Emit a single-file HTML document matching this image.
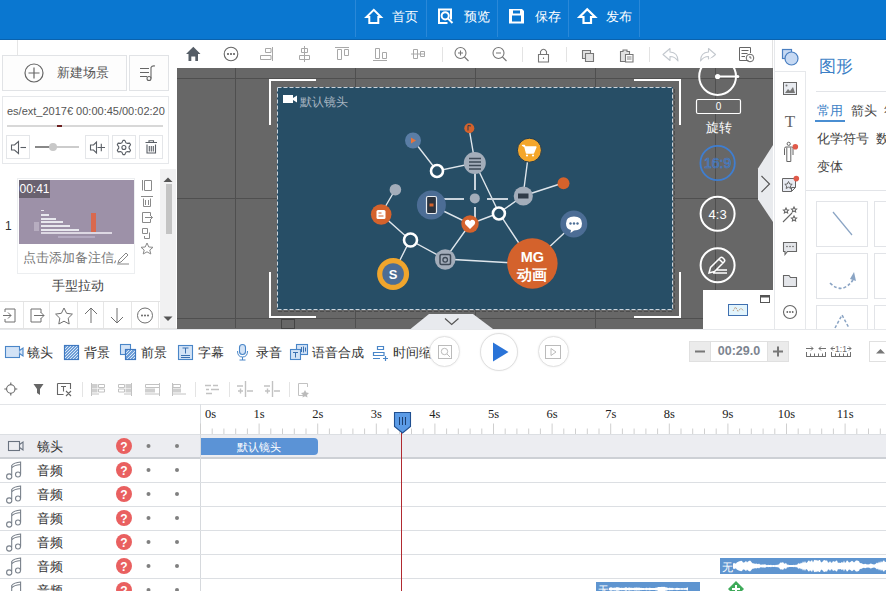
<!DOCTYPE html>
<html><head><meta charset="utf-8">
<style>
*{margin:0;padding:0;box-sizing:border-box}
html,body{width:886px;height:591px;overflow:hidden;background:#fff;font-family:"Liberation Sans",sans-serif;color:#333}
.a{position:absolute}
svg{position:absolute;overflow:visible}
#hdr{left:0;top:0;width:886px;height:40px;background:#0a77d0;border-bottom:1px solid #0a62ad}
.hsep{top:0;width:1px;height:37px;background:#2a88d8}
.htx{top:9px;color:#fff;font-size:13px;line-height:16px}
#tb{left:177px;top:40px;width:596px;height:28px;background:#fff}
#cv{left:177px;top:68px;width:596px;height:261px;background:#676767;overflow:hidden}
.gl{background:#4f4f4f}
#slide{left:100px;top:19px;width:396px;height:223px;background:#274e66}
.tsep{top:47px;width:1px;height:16px;background:#e3e3e3}
</style></head><body>
<!-- header -->
<div id="hdr" class="a">
  <div class="a hsep" style="left:355px"></div>
  <div class="a hsep" style="left:426px"></div>
  <div class="a hsep" style="left:497px"></div>
  <div class="a hsep" style="left:568px"></div>
  <div class="a hsep" style="left:639px"></div>
  <div class="a htx" style="left:392px">首页</div>
  <div class="a htx" style="left:464px">预览</div>
  <div class="a htx" style="left:535px">保存</div>
  <div class="a htx" style="left:606px">发布</div>
</div>

<svg style="left:356px;top:0" width="290" height="40" viewBox="356 0 290 40">
 <path d="M369.3 23V17H366.5L373.8 9.8L381 17H378.3V23Z" fill="none" stroke="#fff" stroke-width="2" stroke-linejoin="miter"/>
 <path d="M451 19.5V9.5H439V23H447.5" fill="none" stroke="#fff" stroke-width="2"/>
 <circle cx="445.2" cy="15.8" r="3.6" fill="none" stroke="#fff" stroke-width="2"/>
 <path d="M447.8 18.4L452.5 23" stroke="#fff" stroke-width="2"/>
 <path d="M509 9H522L524 11V23.5H509Z" fill="#fff"/>
 <rect x="513" y="10.5" width="7" height="3" fill="#0a77d0"/>
 <rect x="512" y="15.5" width="9" height="6" fill="#0a77d0"/>
 <path d="M583.5 23V17H579.5L587.2 9.3L595 17H591V23Z" fill="none" stroke="#fff" stroke-width="2.2" stroke-linejoin="miter"/>
</svg>



<!-- canvas -->
<div id="cv" class="a">
  <div class="a gl" style="left:0;top:10px;width:596px;height:1px"></div>
  <div class="a gl" style="left:0;top:130px;width:596px;height:1px"></div>
  <div class="a gl" style="left:0;top:250px;width:596px;height:1px"></div>
  <div class="a gl" style="left:58px;top:0;width:1px;height:260px"></div>
  <div class="a gl" style="left:178px;top:0;width:1px;height:260px"></div>
  <div class="a gl" style="left:298px;top:0;width:1px;height:260px"></div>
  <div class="a gl" style="left:418px;top:0;width:1px;height:260px"></div>
  <div class="a gl" style="left:538px;top:0;width:1px;height:260px"></div>
  <div id="slide" class="a"></div>
</div>


<!-- left panel -->
<div class="a" style="left:17px;top:40px;width:1px;height:15px;background:#e6e6e6"></div>
<div class="a" style="left:2px;top:55px;width:125px;height:36px;border:1px solid #e1e3e6;background:#fdfdfd"></div>
<svg style="left:24px;top:63px" width="20" height="20" viewBox="0 0 20 20"><circle cx="10" cy="10" r="9" fill="none" stroke="#666" stroke-width="1.2"/><path d="M10 4.5V15.5M4.5 10H15.5" stroke="#666" stroke-width="1.2"/></svg>
<div class="a" style="left:57px;top:66px;font-size:12.5px;color:#555;line-height:14px">新建场景</div>
<div class="a" style="left:129px;top:55px;width:40px;height:36px;border:1px solid #e1e3e6;background:#fdfdfd"></div>
<svg style="left:139px;top:64px" width="20" height="18" viewBox="0 0 20 18"><path d="M1 4.5H10M1 8.5H10M1 12.5H8M12 14.5V3.5Q13 1.5 16 2" stroke="#666" stroke-width="1.1" fill="none"/><circle cx="10" cy="14.5" r="2" fill="none" stroke="#666" stroke-width="1.1"/></svg>
<div class="a" style="left:2px;top:96px;width:167px;height:68px;border:1px solid #e6e8eb;background:#fff"></div>
<div class="a" style="left:7px;top:103px;width:160px;height:16px;overflow:hidden;white-space:nowrap;font-size:11px;color:#555;line-height:16px">es/ext_2017€&nbsp;00:00:45/00:02:20</div>
<div class="a" style="left:7px;top:125px;width:156px;height:2px;background:#d8d8d8"></div>
<div class="a" style="left:57px;top:125px;width:5px;height:2px;background:#6b1d1d"></div>
<div class="a" style="left:6px;top:135px;width:24px;height:24px;border:1px solid #e4e6e9"></div>
<svg style="left:0;top:130px" width="170" height="35" viewBox="0 130 170 35"><g fill="none" stroke="#5a5f66" stroke-width="1.1"><path d="M11.5 145H14.5L18.5 141.5V153.5L14.5 150H11.5Z"/><path d="M20.5 147.5H26"/></g></svg>
<div class="a" style="left:35px;top:146px;width:44px;height:2px;background:#ccc"></div>
<div class="a" style="left:35px;top:146px;width:16px;height:2px;background:#888"></div>
<div class="a" style="left:49px;top:143px;width:8px;height:8px;border-radius:50%;background:#c8c8c8"></div>
<div class="a" style="left:85px;top:135px;width:24px;height:24px;border:1px solid #e4e6e9"></div>
<svg style="left:0;top:130px" width="170" height="35" viewBox="0 130 170 35"><g fill="none" stroke="#5a5f66" stroke-width="1.1"><path d="M90.5 145H93.5L96.5 142V153L93.5 150H90.5Z"/><path d="M97.5 147.5H105M101.3 143.8V151.2"/></g></svg>
<div class="a" style="left:112px;top:135px;width:24px;height:24px;border:1px solid #e4e6e9"></div>
<svg style="left:0;top:130px" width="170" height="35" viewBox="0 130 170 35"><g fill="none" stroke="#5a5f66" stroke-width="1.1" stroke-linejoin="round"><path d="M122.96 140.36L124.84 140.36L125.89 142.70L127.07 143.37L129.61 143.12L130.55 144.74L129.06 146.82L129.06 148.18L130.55 150.26L129.61 151.88L127.07 151.63L125.89 152.30L124.84 154.64L122.96 154.64L121.91 152.30L120.73 151.63L118.19 151.88L117.25 150.26L118.74 148.18L118.74 146.82L117.25 144.74L118.19 143.12L120.73 143.37L121.91 142.70Z"/><circle cx="123.9" cy="147.5" r="2"/></g></svg>
<div class="a" style="left:139px;top:135px;width:24px;height:24px;border:1px solid #e4e6e9"></div>
<svg style="left:0;top:130px" width="170" height="35" viewBox="0 130 170 35"><g fill="none" stroke="#5a5f66" stroke-width="1.1"><path d="M145.5 142.5H157M149 142.5V140.8H153.5V142.5M147 144.5V153H155.5V144.5M149.3 146V151.5M151.3 146V151.5M153.3 146V151.5"/></g></svg>

<div class="a" style="left:5px;top:219px;font-size:12px;color:#333">1</div>
<div class="a" style="left:17px;top:178px;width:118px;height:96px;border:1px solid #eceef0;background:#fff"></div>
<div class="a" style="left:19px;top:180px;width:115px;height:64px;background:#9d91a8;overflow:hidden">
  <div class="a" style="left:0;top:0;width:31px;height:18px;background:#6a6270;color:#fff;font-size:12px;line-height:18px;text-align:center">00:41</div>
  <div class="a" style="left:22px;top:30px;width:3px;height:1px;background:#e8e8ee"></div>
  <div class="a" style="left:22px;top:34px;width:8px;height:2px;background:#e8e8ee"></div>
  <div class="a" style="left:22px;top:38px;width:15px;height:2px;background:#e8e8ee"></div>
  <div class="a" style="left:22px;top:41px;width:22px;height:2px;background:#e8e8ee"></div>
  <div class="a" style="left:22px;top:45px;width:29px;height:2px;background:#e8e8ee"></div>
  <div class="a" style="left:22px;top:49px;width:38px;height:2px;background:#e8e8ee"></div>
  <div class="a" style="left:22px;top:52px;width:71px;height:2px;background:#ddd8e3"></div>
  <div class="a" style="left:72px;top:33px;width:5px;height:19px;background:#d9694e"></div>
  <div class="a" style="left:15px;top:42px;width:5px;height:9px;background:#b7adc0"></div>
  <div class="a" style="left:39px;top:56px;width:37px;height:2px;background:#b3a9c0"></div>
</div>
<div class="a" style="left:23px;top:249px;width:93px;height:18px;overflow:hidden;white-space:nowrap;font-size:13px;color:#777;line-height:18px">点击添加备注信息</div>
<svg style="left:116px;top:251px" width="14" height="14" viewBox="0 0 14 14"><path d="M2 12L3 9L10 2L12 4L5 11ZM1 13H13" fill="none" stroke="#888" stroke-width="1"/></svg>
<div class="a" style="left:52px;top:278px;font-size:12.5px;color:#444;line-height:16px">手型拉动</div>
<svg style="left:138px;top:176px" width="18" height="82" viewBox="138 176 18 82">
 <g fill="none" stroke="#8a8a8a" stroke-width="1">
  <path d="M142.5 180V190.5M144.5 180.5H151.5V190.5H144.5Z"/>
  <path d="M141 196.5H153M143.5 198.5V206.5H150.5V198.5M145.5 200V205M148.5 200V205"/>
  <path d="M150.5 215V212.5H142.5V222.5H150.5V220M145 217.5H152.5M150 215L152.5 217.5L150 220"/>
  <path d="M142.5 228.5H147.5V233.5H142.5ZM149.5 232.5V238.5H144.5V236"/>
  <path d="M147 243L148.8 247L153 247.3L149.8 250L150.8 254L147 251.8L143.2 254L144.2 250L141 247.3L145.2 247Z"/>
 </g>
</svg>
<div class="a" style="left:160px;top:169px;width:16px;height:159px;background:#f1f1f2"></div>
<div class="a" style="left:166px;top:184px;width:6px;height:50px;background:#c4c4c4"></div>
<svg style="left:160px;top:174px" width="16" height="10" viewBox="0 0 16 10"><path d="M3.5 8L8 3.5L12.5 8Z" fill="#555"/></svg>
<svg style="left:160px;top:314px" width="16" height="10" viewBox="0 0 16 10"><path d="M3.5 2.5L8 7L12.5 2.5Z" fill="#555"/></svg>
<div class="a" style="left:0;top:301px;width:160px;height:1px;background:#e2e2e2"></div>
<div class="a" style="left:0;top:328px;width:177px;height:1px;background:#e2e2e2"></div>

<!-- left bottom toolbar -->
<div class="a" style="left:23px;top:302px;width:1px;height:26px;background:#e6e6e6"></div>
<div class="a" style="left:49px;top:302px;width:1px;height:26px;background:#e6e6e6"></div>
<div class="a" style="left:77px;top:302px;width:1px;height:26px;background:#e6e6e6"></div>
<div class="a" style="left:103px;top:302px;width:1px;height:26px;background:#e6e6e6"></div>
<div class="a" style="left:131px;top:302px;width:1px;height:26px;background:#e6e6e6"></div>
<div class="a" style="left:158px;top:302px;width:1px;height:26px;background:#e6e6e6"></div>
<svg style="left:0;top:305px" width="160" height="22" viewBox="0 0 160 22">
 <g fill="none" stroke="#707070" stroke-width="1">
  <path d="M5 7V4H15V17H5V14M3 10.5H11M8 7.5L11 10.5L8 13.5"/>
  <path d="M41 8V4H31V17H41V13M34 10.5H44M41 7.5L44 10.5L41 13.5"/>
  <path d="M64 3L66.6 8.3L72.4 9.1L68.2 13.2L69.2 19L64 16.2L58.8 19L59.8 13.2L55.6 9.1L61.4 8.3Z"/>
  <path d="M91 3V18M85 9L91 3L97 9"/>
  <path d="M117 3V18M111 12L117 18L123 12"/>
  <circle cx="145" cy="10.5" r="7.5"/>
 </g>
 <g fill="#666"><circle cx="142" cy="10.5" r="1"/><circle cx="145" cy="10.5" r="1"/><circle cx="148" cy="10.5" r="1"/></g>
</svg>

<!-- canvas toolbar icons -->
<div class="a" style="left:177px;top:40px;width:596px;height:28px;background:#fff"></div>
<svg style="left:177px;top:40px" width="596" height="28" viewBox="177 40 596 28">
 <path d="M186 54L193.3 46.8L200.5 54H198V61H195.3V56.5H191.3V61H188.5V54Z" fill="#555d66"/>
 <circle cx="231" cy="54" r="6.8" fill="none" stroke="#666" stroke-width="1.1"/>
 <g fill="#555"><circle cx="228" cy="54" r="1"/><circle cx="231" cy="54" r="1"/><circle cx="234" cy="54" r="1"/></g>
 <g fill="none" stroke="#a8a8a8" stroke-width="1">
  <path d="M272.5 47V61M265.5 48.5H271V52.5H265.5ZM260.5 55.5H271V59.5H260.5Z"/>
  <path d="M304.5 46V62M301.5 48.5H307.5V52.5H301.5ZM299.5 55.5H309.5V59.5H299.5Z"/>
  <path d="M335 47.5H349M337.5 49.5V59.5H341.5V49.5ZM344.5 49.5V55.5H348.5V49.5Z"/>
  <path d="M373 60.5H387M375.5 48.5V58.5H379.5V48.5ZM382.5 52.5V58.5H386.5V52.5Z"/>
  <path d="M411 54H425M413.5 49.5V58.5H417.5V49.5ZM420.5 51.5V56.5H424.5V51.5Z"/>
 </g>
 <g fill="none" stroke="#777" stroke-width="1.1">
  <circle cx="460.5" cy="53" r="5.5"/><path d="M464.5 57L468.5 61M458 53H463M460.5 50.5V55.5"/>
  <circle cx="498.5" cy="53" r="5.5"/><path d="M502.5 57L506.5 61M496 53H501"/>
  <path d="M538.5 54.5H548.5V62H538.5ZM540.5 54.5V51.5Q543.5 47 546.5 51.5V54.5M543.5 57.5V59"/>
  <path d="M582.5 50.5H590.5V58.5H582.5Z" fill="#e2e2e2"/><path d="M585.5 53.5H593.5V61.5H585.5Z" fill="#e2e2e2"/>
  <path d="M620.5 51.5H623V50H627V51.5H629.5V61.5H620.5Z" fill="#e2e2e2"/><path d="M625.5 54.5H633V62H625.5Z" fill="#fff"/><path d="M627 57H631.5M627 59H631.5" stroke-width="0.9"/>
 </g>
 <g fill="none" stroke="#c3c8ce" stroke-width="1.1" stroke-linejoin="round">
  <path d="M663 54.5L670 48.5V52Q678 52.5 678 61Q675 56.5 670 56.5V60.5Z"/>
  <path d="M715.5 54.5L708.5 48.5V52Q700.5 52.5 700.5 61Q703.5 56.5 708.5 56.5V60.5Z"/>
 </g>
 <g fill="none" stroke="#666" stroke-width="1">
  <path d="M748.5 60.5H739.5V47.5H750.5V53M741.5 50.5H748.5M741.5 53.5H747.5M741.5 56.5H745"/>
  <circle cx="750" cy="58" r="3.8"/><path d="M750 56V58H751.5"/>
 </g>
 <g fill="#e3e3e3"><rect x="442" y="47" width="1" height="15"/><rect x="522" y="47" width="1" height="15"/><rect x="566" y="47" width="1" height="15"/><rect x="649" y="47" width="1" height="15"/><rect x="772" y="40" width="1" height="28"/></g>
</svg>

<!-- slide content -->
<svg style="left:177px;top:68px" width="596" height="260" viewBox="177 68 596 260">
 <rect x="277.5" y="87.5" width="395" height="222" fill="none" stroke="#c9d3dc" stroke-width="1" stroke-dasharray="4 2"/>
 <path d="M278 311.5H673M674.5 89V310" stroke="#4d4d4d" stroke-width="1" stroke-dasharray="4 2"/>
 <g fill="none" stroke="#fff" stroke-width="2">
  <path d="M270 125V80H316"/>
  <path d="M634 80H680V125"/>
  <path d="M270 272V317H316"/>
  <path d="M634 317H680V272"/>
 </g>
 <path d="M283 95H293V103H283Z M293 98L297 95.5V102.5L293 100Z" fill="#fff"/>
 <text x="300" y="106" font-size="12" fill="#a8b5c1" font-family="Liberation Sans">默认镜头</text>
 <g stroke="#dfe6ec" stroke-width="1.4" fill="none">
  <path d="M413 140L437 171L475 163L469 128"/>
  <path d="M475 163L499 213L532 263L574 224"/>
  <path d="M499 213L523 196L563 183M523 196L529 150"/>
  <path d="M431 205L470 224L499 213M470 224L445 259L532 264"/>
  <path d="M395 190L381 214L410 240L445 259M410 240L393 274"/>
 </g>
 <g stroke="#c9d3dc" stroke-width="2" fill="none">
  <path d="M442 199H464M487 199H508M475 173V190M475 207V222"/>
 </g>
 <circle cx="413" cy="140.5" r="8" fill="#5a7da5"/>
 <path d="M411 137.5L416 140.5L411 143.5Z" fill="#e8743b"/>
 <circle cx="469.3" cy="128.3" r="5" fill="#d4622c"/>
 <path d="M468 130.5V125.5L471 126" stroke="#2a3a4a" stroke-width="1" fill="none"/>
 <circle cx="437" cy="171" r="6" fill="#274e66" stroke="#fff" stroke-width="2.6"/>
 <circle cx="474.8" cy="163" r="11" fill="#a3adba"/>
 <path d="M469 158.5H481M469 162H481M469 165.5H481M469 169H481" stroke="#3e4a57" stroke-width="1.4"/>
 <circle cx="529.4" cy="150.2" r="12" fill="#f4a62a" stroke="#1f3b52" stroke-width="1"/>
 <path d="M522.5 145.5H524.5L526.5 153H533.5L536 147H525.2Z" stroke="#fff" stroke-width="1.3" fill="#fff" stroke-linejoin="round"/>
 <circle cx="527" cy="155.5" r="1.1" fill="#fff"/><circle cx="533" cy="155.5" r="1.1" fill="#fff"/>
 <circle cx="563.5" cy="183.3" r="6" fill="#d4622c"/>
 <circle cx="523.3" cy="196" r="9.6" fill="#a3adba"/>
 <rect x="518" y="193.5" width="10.5" height="5" fill="#2f3b48"/>
 <circle cx="395.4" cy="189.7" r="5.8" fill="#a3adba"/>
 <circle cx="431.4" cy="205" r="14.5" fill="#4c6d95"/>
 <rect x="426.5" y="196.5" width="10" height="17" rx="1.5" fill="#2b3440" stroke="#e8ecf0" stroke-width="1.2"/>
 <rect x="429.5" y="203.5" width="4" height="3" fill="#d4622c"/>
 <circle cx="474.8" cy="198.4" r="5" fill="#a3adba"/>
 <circle cx="498.9" cy="213.5" r="6" fill="#274e66" stroke="#fff" stroke-width="2.6"/>
 <circle cx="470" cy="224" r="8.7" fill="#d4622c"/>
 <path d="M470 229L465.5 224.5Q464 222 466 220.3Q468.5 219 470 221.3Q471.5 219 474 220.3Q476 222 474.5 224.5Z" fill="#fff"/>
 <circle cx="381.2" cy="214.5" r="10.3" fill="#d4622c"/>
 <rect x="376.5" y="210" width="9" height="9" rx="1.5" fill="#fff"/>
 <path d="M378.5 213H381.5M378.5 216H383.5" stroke="#d4622c" stroke-width="1.2"/>
 <circle cx="410.5" cy="240" r="6.5" fill="#274e66" stroke="#fff" stroke-width="2.6"/>
 <circle cx="445.2" cy="259.5" r="10.3" fill="#a3adba"/>
 <rect x="440" y="254.5" width="10.5" height="10" rx="1.5" fill="none" stroke="#3e4a57" stroke-width="1.5"/>
 <circle cx="445.2" cy="259.8" r="2.3" fill="none" stroke="#3e4a57" stroke-width="1.3"/>
 <circle cx="393.1" cy="274" r="16" fill="#f0a52c"/>
 <circle cx="393.1" cy="274" r="10.8" fill="#4c6d95"/>
 <text x="393.1" y="279" font-size="13" font-weight="bold" fill="#fff" text-anchor="middle" font-family="Liberation Sans">S</text>
 <circle cx="532.4" cy="263.5" r="25.2" fill="#d4622c"/>
 <text x="532.4" y="261.5" font-size="14.5" font-weight="bold" fill="#fff" text-anchor="middle" font-family="Liberation Sans">MG</text>
 <text x="532.4" y="280" font-size="14.5" font-weight="bold" fill="#fff" text-anchor="middle" font-family="Liberation Sans">动画</text>
 <circle cx="573.8" cy="224" r="13.5" fill="#4c6d95"/>
 <path d="M566 223.5Q566 216.5 574 216.5Q582 216.5 582 223.5Q582 230.5 574 230.5L570.5 233L571 230Q566 229 566 223.5Z" fill="#fff"/>
 <g fill="#4c6d95"><circle cx="570.5" cy="223.5" r="1.2"/><circle cx="574" cy="223.5" r="1.2"/><circle cx="577.5" cy="223.5" r="1.2"/></g>
 <!-- right controls -->
 <circle cx="717.6" cy="76.5" r="18.4" fill="none" stroke="#fff" stroke-width="2"/>
 <path d="M717.6 76.5H737.7" stroke="#fff" stroke-width="2"/>
 <circle cx="717.6" cy="76.5" r="2.6" fill="#fff"/>
 <circle cx="737.7" cy="76.5" r="1.6" fill="#fff"/>
 <rect x="696.5" y="99.5" width="44" height="14" rx="1.5" fill="#676767" stroke="#fff" stroke-width="1.2"/>
 <text x="718.5" y="110" font-size="10" fill="#fff" text-anchor="middle" font-family="Liberation Sans">0</text>
 <text x="719" y="132" font-size="12.5" fill="#fff" text-anchor="middle" font-family="Liberation Sans">旋转</text>
 <circle cx="717.6" cy="163" r="17.2" fill="none" stroke="#3f7ed0" stroke-width="1.8"/>
 <text x="717.6" y="168" font-size="14" fill="none" stroke="#3f7ed0" stroke-width="0.7" text-anchor="middle" font-family="Liberation Sans">16:9</text>
 <circle cx="717.6" cy="213.8" r="17" fill="none" stroke="#fff" stroke-width="2"/>
 <text x="717.6" y="218.5" font-size="13" fill="#fff" text-anchor="middle" font-family="Liberation Sans">4:3</text>
 <circle cx="717.6" cy="265.3" r="17" fill="none" stroke="#fff" stroke-width="2"/>
 <path d="M709 273L710.5 267.5L720 258Q721.5 256.5 723 258L724 259Q725.5 260.5 724 262L714.5 271.5Z M719 259L723 263 M713 273H727 M716 270H727" fill="none" stroke="#fff" stroke-width="1.5"/>
 <path d="M758 168.5L774 143.5V223.5L758 199.5Z" fill="#e9ebee"/>
 <path d="M761.5 176L769.5 184L761.5 192" fill="none" stroke="#555" stroke-width="1.2"/>
 <rect x="703" y="290" width="70" height="39" fill="#fff"/>
 <rect x="728.5" y="304.5" width="19" height="11" fill="#e2f4fc" stroke="#3f6fb0" stroke-width="1"/>
 <path d="M733 311L735.5 307L738 311.5L741 308L743.5 311" fill="none" stroke="#b07a50" stroke-width="0.9" stroke-dasharray="1 1"/>
 <rect x="760.5" y="295.5" width="9" height="7" fill="none" stroke="#555" stroke-width="1"/>
 <rect x="760.5" y="295.5" width="9" height="2" fill="#555"/>
 <path d="M410.5 329L429 314H473L493 329Z" fill="#e8eaee"/>
 <path d="M445 318.5L451.7 324.5L458.5 318.5" fill="none" stroke="#555" stroke-width="1.2"/>
 <rect x="281.5" y="319.5" width="13" height="9" fill="none" stroke="#444" stroke-width="1"/>
</svg>

<!-- right icon column -->
<div class="a" style="left:773px;top:40px;width:113px;height:289px;background:#fff"></div>
<div class="a" style="left:774px;top:40px;width:1px;height:289px;background:#e6e8eb"></div>
<div class="a" style="left:774px;top:71px;width:32px;height:1px;background:#e6e8eb"></div>
<div class="a" style="left:805px;top:71px;width:1px;height:258px;background:#e6e8eb"></div>
<svg style="left:773px;top:40px" width="33" height="289" viewBox="773 40 33 289">
 <rect x="782.5" y="49.5" width="9" height="9" fill="#c6d9f3" stroke="#4a7fc1" stroke-width="1.2"/>
 <circle cx="791.5" cy="58.5" r="6.5" fill="#c6d9f3" stroke="#4a7fc1" stroke-width="1.2"/>
 <g fill="none" stroke="#666" stroke-width="1">
  <rect x="783.5" y="82.5" width="13" height="12" fill="#e8ebf0"/>
 </g>
 <path d="M785 93L788 89L790 91L793 87L795 93Z" fill="#777"/>
 <circle cx="786.5" cy="85.5" r="1" fill="#777"/>
 <text x="790" y="126.5" font-size="17" fill="#666" text-anchor="middle" font-family="Liberation Serif">T</text>
 <g fill="none" stroke="#666" stroke-width="1">
  <circle cx="788.7" cy="143.8" r="1.6"/>
  <path d="M784.5 155V148.5Q784.5 147 786 147H791.5Q793 147 793 148.5V155M786.8 147.5V161.5H790.8V147.5"/>
 </g>
 <circle cx="795.3" cy="146.7" r="2.8" fill="#e05a4a"/>
 <g fill="none" stroke="#666" stroke-width="1">
  <path d="M782.5 178.5H795.5V187.5L791.5 191.5H782.5Z" fill="#e8ebf2"/>
  <path d="M791.5 191.5V187.5H795.5"/>
  <path d="M788.5 181.5L789.7 184L792.2 184.3L790.3 186L790.8 188.5L788.5 187.2L786.2 188.5L786.7 186L784.8 184.3L787.3 184Z"/>
 </g>
 <circle cx="796.3" cy="178.6" r="2.8" fill="#e05a4a"/>
 <g fill="none" stroke="#666" stroke-width="1.1">
  <path d="M783 222L792 213"/>
  <path d="M786 208L786.8 209.7L788.6 210L787.3 211.2L787.6 213L786 212.1L784.4 213L784.7 211.2L783.4 210L785.2 209.7Z"/>
  <path d="M794 207L794.8 208.7L796.6 209L795.3 210.2L795.6 212L794 211.1L792.4 212L792.7 210.2L791.4 209L793.2 208.7Z"/>
  <path d="M794 216L794.8 217.7L796.6 218L795.3 219.2L795.6 221L794 220.1L792.4 221L792.7 219.2L791.4 218L793.2 217.7Z"/>
  <path d="M783.5 242.5H796.5V251.5H787.5L785 254.5V251.5H783.5Z" fill="#e4e6ea"/>
  <path d="M783.5 275.5H789L790.5 277.5H796.5V286.5H783.5Z" fill="#e4e6ea"/>
  <circle cx="790" cy="312" r="6.5"/>
 </g>
 <g fill="#666"><circle cx="787" cy="246.5" r="0.8"/><circle cx="790" cy="246.5" r="0.8"/><circle cx="793" cy="246.5" r="0.8"/>
 <circle cx="787.3" cy="312" r="0.9"/><circle cx="790" cy="312" r="0.9"/><circle cx="792.7" cy="312" r="0.9"/></g>
</svg>
<!-- right panel -->
<div class="a" style="left:819px;top:57px;font-size:17px;color:#3c7fc6;line-height:20px">图形</div>
<div class="a" style="left:816px;top:91px;width:70px;height:1px;background:#e2e4e8"></div>
<div class="a" style="left:817px;top:104px;font-size:12.5px;color:#3c7fc6;line-height:15px">常用</div>
<div class="a" style="left:815px;top:120px;width:30px;height:2px;background:#4a8ed2"></div>
<div class="a" style="left:851px;top:104px;font-size:12.5px;color:#444;line-height:15px;white-space:nowrap">箭头&nbsp;&nbsp;符</div>
<div class="a" style="left:817px;top:132px;font-size:12.5px;color:#444;line-height:15px;white-space:nowrap">化学符号&nbsp;&nbsp;数</div>
<div class="a" style="left:817px;top:160px;font-size:12.5px;color:#444;line-height:15px">变体</div>
<div class="a" style="left:806px;top:190px;width:80px;height:1px;background:#e2e4e8"></div>
<div class="a" style="left:816px;top:201px;width:52px;height:46px;border:1px solid #e2e4e8"></div>
<div class="a" style="left:874px;top:201px;width:20px;height:46px;border:1px solid #e2e4e8"></div>
<div class="a" style="left:816px;top:253px;width:52px;height:46px;border:1px solid #e2e4e8"></div>
<div class="a" style="left:874px;top:253px;width:20px;height:46px;border:1px solid #e2e4e8"></div>
<div class="a" style="left:816px;top:305px;width:52px;height:24px;border:1px solid #e2e4e8;border-bottom:none"></div>
<div class="a" style="left:874px;top:305px;width:20px;height:24px;border:1px solid #e2e4e8;border-bottom:none"></div>
<svg style="left:806px;top:190px" width="80" height="139" viewBox="806 190 80 139">
 <path d="M833 212L852 235" stroke="#8aa4c4" stroke-width="1.2"/>
 <path d="M830 283Q842 295 853 280" fill="none" stroke="#8aa4c4" stroke-width="1.6" stroke-dasharray="3 2"/>
 <path d="M850 279L854 272L856 281Z" fill="#8aa4c4"/>
 <path d="M835 328L842 315L849 328" fill="none" stroke="#8aa4c4" stroke-width="1.5" stroke-dasharray="3 2"/>
</svg>
<div class="a" style="left:0;top:329px;width:886px;height:1px;background:#e6e8eb"></div>

<!-- timeline toolbar row1 -->
<svg style="left:0;top:335px" width="886" height="70" viewBox="0 335 886 70">
 <g fill="#d3e3f6" stroke="#4a86c8" stroke-width="1.1">
  <rect x="5.5" y="346.5" width="14" height="11"/>
  <path d="M19.5 350.5L23 348V356L19.5 353.5"/>
  <rect x="64.5" y="345.5" width="14" height="14"/>
  <rect x="120.5" y="344.5" width="10" height="10"/>
  <rect x="125.5" y="349.5" width="10" height="10"/>
  <rect x="178.5" y="345.5" width="14" height="14"/>
  <rect x="296.5" y="344.5" width="11" height="10"/>
  <rect x="290.5" y="349.5" width="10" height="10"/>
  <rect x="239.5" y="344.5" width="6" height="10" rx="3"/>
 </g>
 <rect x="64.5" y="345.5" width="14" height="14" fill="#6f9fd8"/><path d="M65 349L68 346M65 352L71 346M65 355L74 346M65 358L77 346M67 359L78 348M70 359L78 351M73 359L78 354M76 359L78 357" stroke="#e8f0fa" stroke-width="0.9"/><rect x="64.5" y="345.5" width="14" height="14" fill="none" stroke="#3f78c0" stroke-width="1.1"/>
 <rect x="125.5" y="349.5" width="10" height="10" fill="#6f9fd8"/><path d="M126 353L129 350M126 356L132 350M127 359L135 351M130 359L135 354M133 359L135 357" stroke="#e8f0fa" stroke-width="0.9"/><rect x="125.5" y="349.5" width="10" height="10" fill="none" stroke="#3f78c0" stroke-width="1.1"/>
 <path d="M182.5 348H188.5M185.5 348V353.5M181 355.5H190M181 357.5H190" stroke="#3a70b0" stroke-width="1" fill="none"/>
 <path d="M237.5 351Q237.5 357 242.5 357Q247.5 357 247.5 351M242.5 357V360M239.5 360H245.5" stroke="#4a86c8" stroke-width="1" fill="none"/>
 <path d="M301.5 347V352M303.5 346.5V352.5M305.5 347.5V351.5M293 352.5H298M295.5 352.5V357.5" stroke="#3a70b0" stroke-width="1"/>
 <g fill="none" stroke="#4a86c8" stroke-width="1.2">
  <path d="M377.5 346.5H383.5V349.5H377.5ZM373.5 352.5H384V355.5H373.5ZM373 358.5H380M383 358.5H388M385.5 356V361"/>
 </g>
 <!-- row2 -->
 <g fill="none" stroke="#666" stroke-width="1.1">
  <circle cx="10.8" cy="389" r="4.2"/><path d="M10.8 382.5V385M10.8 393V395.5M4.3 389H6.8M14.8 389H17.3"/>
  <path d="M57.5 383.5H70.5V389M57.5 383.5V394.5H63.5M61 386.5H66M63.5 386.5V391.5M66 391L71 396M71 391L66 396"/>
 </g>
 <path d="M33.5 384H43.5L40 389V395L37 393V389Z" fill="#666"/>
 <g fill="none" stroke="#c2c2c2" stroke-width="1">
  <path d="M91.5 383V396M98.5 384.5H104.5V387.5H98.5ZM98.5 389H104.5V392H98.5ZM92 394H99"/>
  <path d="M131.5 383V396M118.5 384.5H124.5V387.5H118.5ZM118.5 389H124.5V392H118.5ZM124 394H131"/>
  <path d="M145.5 384.5H159.5V387.5H145.5ZM145 394H159M159.5 383V396" stroke-dasharray="none"/>
  <path d="M172.5 383V396M173 384.5H180.5V387.5H173ZM173 394H186" />
 </g>
 <g fill="#cfcfcf">
  <rect x="92" y="384" width="5.5" height="4"/><rect x="92" y="388.5" width="5.5" height="4"/>
  <rect x="125.5" y="384" width="5.5" height="4"/><rect x="125.5" y="388.5" width="5.5" height="4"/>
  <rect x="145" y="388.5" width="10" height="4"/>
  <rect x="173" y="388.5" width="8" height="4"/>
 </g>
 <g fill="none" stroke="#c2c2c2" stroke-width="1">
  <path d="M205 385.5H211M213 385.5H218M206 389.5H209M211 389.5H219M206 393.5H212" stroke-width="1.6"/>
  <path d="M245.5 381V397M237 386H243M247 391H253M240.5 388.5V393.5M238 391H243" stroke-width="1.4"/>
  <path d="M272.5 381V397M264 386H270M274 391H280M267.5 388.5V393.5M265 391H270" stroke-width="1.4"/>
  <path d="M298.5 383.5H307.5V387M298.5 383.5V395.5H304"/>
 </g>
 <path d="M305 390L306.3 392.5L309 393L307 395L307.5 397.5L305 396.3L302.5 397.5L303 395L301 393L303.7 392.5Z" fill="#bbb"/>
 <g fill="#e4e4e4"><rect x="82" y="382" width="1" height="15"/><rect x="195" y="382" width="1" height="15"/><rect x="229" y="382" width="1" height="15"/><rect x="289" y="382" width="1" height="15"/></g>
</svg>
<div class="a" style="left:27px;top:346px;font-size:12.5px;color:#333;line-height:15px">镜头</div>
<div class="a" style="left:84px;top:346px;font-size:12.5px;color:#333;line-height:15px">背景</div>
<div class="a" style="left:141px;top:346px;font-size:12.5px;color:#333;line-height:15px">前景</div>
<div class="a" style="left:198px;top:346px;font-size:12.5px;color:#333;line-height:15px">字幕</div>
<div class="a" style="left:256px;top:346px;font-size:12.5px;color:#333;line-height:15px">录音</div>
<div class="a" style="left:312px;top:346px;font-size:12.5px;color:#333;line-height:15px">语音合成</div>
<div class="a" style="left:393px;top:346px;width:40px;overflow:hidden;white-space:nowrap;font-size:12.5px;color:#333;line-height:15px">时间缩放</div>
<!-- round buttons -->
<div class="a" style="left:429px;top:336px;width:31px;height:31px;border-radius:50%;background:#fff;border:1px solid #e2e2e2;box-shadow:0 0 2px rgba(0,0,0,.08)"></div>
<svg style="left:430px;top:337px" width="30" height="30" viewBox="0 0 30 30"><rect x="8.5" y="8.5" width="13" height="13" fill="none" stroke="#bbb" stroke-width="1"/><circle cx="14.5" cy="14.5" r="3.2" fill="none" stroke="#bbb" stroke-width="1"/><path d="M17 17L20 20" stroke="#bbb" stroke-width="1"/></svg>
<div class="a" style="left:480px;top:333px;width:38px;height:38px;border-radius:50%;background:#fff;border:1px solid #e0e0e0;box-shadow:0 0 2px rgba(0,0,0,.08)"></div>
<svg style="left:480px;top:333px" width="38" height="38" viewBox="0 0 38 38"><path d="M13 9.5L28.5 19L13 28.5Z" fill="#2a74d8"/></svg>
<div class="a" style="left:538px;top:336px;width:31px;height:31px;border-radius:50%;background:#fff;border:1px solid #e2e2e2;box-shadow:0 0 2px rgba(0,0,0,.08)"></div>
<svg style="left:538px;top:337px" width="30" height="30" viewBox="0 0 30 30"><rect x="7.5" y="8.5" width="15" height="13" fill="none" stroke="#bbb" stroke-width="1"/><path d="M13 11.5L18 15L13 18.5Z" fill="none" stroke="#bbb" stroke-width="1"/></svg>
<!-- duration -->
<div class="a" style="left:689px;top:341px;width:100px;height:21px;border:1px solid #e0e0e0;background:#fff"></div>
<div class="a" style="left:689px;top:341px;width:22px;height:21px;background:#ebebeb;border:1px solid #e0e0e0"></div>
<div class="a" style="left:767px;top:341px;width:22px;height:21px;background:#ebebeb;border:1px solid #e0e0e0"></div>
<svg style="left:689px;top:341px" width="100" height="21" viewBox="0 0 100 21"><path d="M6 10.5H16M84 10.5H94M89 5.5V15.5" stroke="#777" stroke-width="2"/></svg>
<div class="a" style="left:711px;top:344px;width:56px;text-align:center;font-size:12.5px;font-weight:bold;color:#7d8590;line-height:15px">00:29.0</div>
<svg style="left:800px;top:340px" width="60" height="24" viewBox="800 340 60 24">
 <g fill="none" stroke="#707070" stroke-width="1">
  <path d="M806 356.5H826M806.5 352V356.5M810.5 353.5V356.5M814.5 353.5V356.5M818.5 353.5V356.5M822.5 353.5V356.5M825.5 352V356.5"/>
  <path d="M806 348.5H813M811 346.5L813 348.5L811 350.5M826 348.5H819M821 346.5L819 348.5L821 350.5"/>
  <path d="M831 356.5H851M831.5 352V356.5M835.5 353.5V356.5M839.5 353.5V356.5M843.5 353.5V356.5M847.5 353.5V356.5M850.5 352V356.5"/>
  <path d="M831 348.5H835M833 346.5L831 348.5L833 350.5M847 348.5H851M849 346.5L851 348.5L849 350.5"/>
 </g>
 <text x="841" y="351.5" font-size="8.5" fill="#707070" text-anchor="middle" font-family="Liberation Sans">1:1</text>
</svg>
<div class="a" style="left:869px;top:341px;width:25px;height:21px;border:1px solid #e0e0e0;background:#fff"></div>
<svg style="left:869px;top:341px" width="17" height="21" viewBox="0 0 17 21"><path d="M7 12.5L11.5 8L16 12.5Z" fill="#777"/></svg>

<!-- timeline -->
<div class="a" style="left:0;top:404px;width:886px;height:1px;background:#e3e5e8"></div>
<div class="a" style="left:200px;top:404px;width:1px;height:187px;background:#dcdfe3"></div>
<div class="a" style="left:0;top:434px;width:886px;height:25px;background:#ecedf1;border-top:1px solid #dcdfe3;border-bottom:2px solid #cdd0d5"></div>
<div class="a" style="left:200px;top:434px;width:1px;height:157px;background:#d6d9dd"></div>
<svg style="left:0;top:404px" width="886" height="187" viewBox="0 404 886 187">
 <g stroke="#cfcfcf" stroke-width="1" fill="none"><path d="M200.5 423.5V434M212.2 428.5V434M223.9 428.5V434M235.7 428.5V434M247.4 428.5V434M259.1 423.5V434M270.8 428.5V434M282.5 428.5V434M294.3 428.5V434M306.0 428.5V434M317.7 423.5V434M329.4 428.5V434M341.1 428.5V434M352.9 428.5V434M364.6 428.5V434M376.3 423.5V434M388.0 428.5V434M399.7 428.5V434M411.5 428.5V434M423.2 428.5V434M434.9 423.5V434M446.6 428.5V434M458.3 428.5V434M470.1 428.5V434M481.8 428.5V434M493.5 423.5V434M505.2 428.5V434M516.9 428.5V434M528.7 428.5V434M540.4 428.5V434M552.1 423.5V434M563.8 428.5V434M575.5 428.5V434M587.3 428.5V434M599.0 428.5V434M610.7 423.5V434M622.4 428.5V434M634.1 428.5V434M645.9 428.5V434M657.6 428.5V434M669.3 423.5V434M681.0 428.5V434M692.7 428.5V434M704.5 428.5V434M716.2 428.5V434M727.9 423.5V434M739.6 428.5V434M751.3 428.5V434M763.1 428.5V434M774.8 428.5V434M786.5 423.5V434M798.2 428.5V434M809.9 428.5V434M821.7 428.5V434M833.4 428.5V434M845.1 423.5V434M856.8 428.5V434M868.5 428.5V434M880.3 428.5V434"/></g>
 <text x="205" y="418" font-size="12.5" fill="#222" font-family="Liberation Serif">0s</text>
 <text x="259.1" y="418" font-size="12.5" fill="#222" text-anchor="middle" font-family="Liberation Serif">1s</text>
 <text x="317.7" y="418" font-size="12.5" fill="#222" text-anchor="middle" font-family="Liberation Serif">2s</text>
 <text x="376.3" y="418" font-size="12.5" fill="#222" text-anchor="middle" font-family="Liberation Serif">3s</text>
 <text x="434.9" y="418" font-size="12.5" fill="#222" text-anchor="middle" font-family="Liberation Serif">4s</text>
 <text x="493.5" y="418" font-size="12.5" fill="#222" text-anchor="middle" font-family="Liberation Serif">5s</text>
 <text x="552.1" y="418" font-size="12.5" fill="#222" text-anchor="middle" font-family="Liberation Serif">6s</text>
 <text x="610.7" y="418" font-size="12.5" fill="#222" text-anchor="middle" font-family="Liberation Serif">7s</text>
 <text x="669.3" y="418" font-size="12.5" fill="#222" text-anchor="middle" font-family="Liberation Serif">8s</text>
 <text x="727.9" y="418" font-size="12.5" fill="#222" text-anchor="middle" font-family="Liberation Serif">9s</text>
 <text x="786.5" y="418" font-size="12.5" fill="#222" text-anchor="middle" font-family="Liberation Serif">10s</text>
 <text x="845.1" y="418" font-size="12.5" fill="#222" text-anchor="middle" font-family="Liberation Serif">11s</text>
 <g fill="#dcdfe3">
  <rect x="0" y="482" width="886" height="1"/><rect x="0" y="506" width="886" height="1"/>
  <rect x="0" y="530" width="886" height="1"/><rect x="0" y="554" width="886" height="1"/>
  <rect x="0" y="578" width="886" height="1"/>
 </g>
 <path d="M201 438H314Q318 438 318 442V451Q318 455 314 455H201Z" fill="#5b93d6"/>
 <text x="259" y="450.5" font-size="11" fill="#fff" text-anchor="middle" font-family="Liberation Sans">默认镜头</text>
 <rect x="720" y="558" width="166" height="16" fill="#5f95d0"/>
 <rect x="596" y="582" width="104" height="12" fill="#5f95d0"/>
 <text x="722" y="571" font-size="11" fill="#fff" font-family="Liberation Sans">无</text>
 <text x="598" y="594" font-size="11" fill="#fff" font-family="Liberation Sans">无</text>
 <path d="M733.0 563.8L734.0 562.7L735.0 563.4L736.0 563.4L737.0 562.3L738.0 562.0L739.0 561.2L740.0 561.3L741.0 560.8L742.0 560.9L743.0 562.5L744.0 562.4L745.0 561.9L746.0 560.7L747.0 562.5L748.0 561.6L749.0 560.9L750.0 560.6L751.0 561.6L752.0 562.7L753.0 563.6L754.0 563.2L755.0 563.9L756.0 563.6L757.0 563.8L758.0 564.2L759.0 563.4L760.0 564.6L761.0 564.7L762.0 564.4L763.0 564.6L764.0 564.6L765.0 564.3L766.0 564.8L767.0 565.3L768.0 564.8L769.0 565.1L770.0 564.9L771.0 564.8L772.0 565.3L773.0 565.1L774.0 564.9L775.0 565.2L776.0 564.8L777.0 565.1L778.0 564.4L779.0 564.6L780.0 562.8L781.0 562.6L782.0 562.7L783.0 562.0L784.0 563.5L785.0 563.7L786.0 562.8L787.0 564.7L788.0 564.4L789.0 565.0L790.0 564.9L791.0 565.0L792.0 565.0L793.0 565.0L794.0 564.7L795.0 565.2L796.0 564.6L797.0 564.9L798.0 563.6L799.0 563.3L800.0 564.0L801.0 562.4L802.0 563.4L803.0 561.2L804.0 562.9L805.0 561.0L806.0 563.1L807.0 562.4L808.0 561.3L809.0 560.3L810.0 561.7L811.0 561.0L812.0 560.0L813.0 562.6L814.0 560.3L815.0 559.8L816.0 560.6L817.0 560.1L818.0 561.1L819.0 560.1L820.0 559.9L821.0 562.3L822.0 562.3L823.0 561.1L824.0 559.9L825.0 560.2L826.0 560.8L827.0 560.3L828.0 562.4L829.0 562.4L830.0 561.0L831.0 562.6L832.0 562.8L833.0 561.1L834.0 561.5L835.0 561.7L836.0 560.8L837.0 560.5L838.0 562.9L839.0 562.5L840.0 563.0L841.0 562.8L842.0 561.8L843.0 563.0L844.0 560.5L845.0 562.9L846.0 562.1L847.0 560.2L848.0 561.3L849.0 562.5L850.0 562.3L851.0 561.6L852.0 560.7L853.0 561.6L854.0 562.4L855.0 561.5L856.0 560.5L857.0 560.4L858.0 560.8L859.0 561.3L860.0 563.3L861.0 563.1L862.0 563.5L863.0 563.9L864.0 564.3L865.0 563.8L866.0 564.1L867.0 564.4L868.0 564.3L869.0 564.5L870.0 563.7L871.0 563.5L872.0 563.9L873.0 564.2L874.0 564.4L875.0 564.3L876.0 563.4L877.0 562.5L878.0 563.6L879.0 561.4L880.0 562.9L881.0 561.1L882.0 562.4L883.0 561.0L884.0 560.2L885.0 561.9L886.0 561.8L886.0 570.2L885.0 570.1L884.0 571.8L883.0 571.0L882.0 569.6L881.0 570.9L880.0 569.1L879.0 570.6L878.0 568.4L877.0 569.5L876.0 568.6L875.0 567.7L874.0 567.6L873.0 567.8L872.0 568.1L871.0 568.5L870.0 568.3L869.0 567.5L868.0 567.7L867.0 567.6L866.0 567.9L865.0 568.2L864.0 567.7L863.0 568.1L862.0 568.5L861.0 568.9L860.0 568.7L859.0 570.7L858.0 571.2L857.0 571.6L856.0 571.5L855.0 570.5L854.0 569.6L853.0 570.4L852.0 571.3L851.0 570.4L850.0 569.7L849.0 569.5L848.0 570.7L847.0 571.8L846.0 569.9L845.0 569.1L844.0 571.5L843.0 569.0L842.0 570.2L841.0 569.2L840.0 569.0L839.0 569.5L838.0 569.1L837.0 571.5L836.0 571.2L835.0 570.3L834.0 570.5L833.0 570.9L832.0 569.2L831.0 569.4L830.0 571.0L829.0 569.6L828.0 569.6L827.0 571.7L826.0 571.2L825.0 571.8L824.0 572.1L823.0 570.9L822.0 569.7L821.0 569.7L820.0 572.1L819.0 571.9L818.0 570.9L817.0 571.9L816.0 571.4L815.0 572.2L814.0 571.7L813.0 569.4L812.0 572.0L811.0 571.0L810.0 570.3L809.0 571.7L808.0 570.7L807.0 569.6L806.0 568.9L805.0 571.0L804.0 569.1L803.0 570.8L802.0 568.6L801.0 569.6L800.0 568.0L799.0 568.7L798.0 568.4L797.0 567.1L796.0 567.4L795.0 566.8L794.0 567.3L793.0 567.0L792.0 567.0L791.0 567.0L790.0 567.1L789.0 567.0L788.0 567.6L787.0 567.3L786.0 569.2L785.0 568.3L784.0 568.5L783.0 570.0L782.0 569.3L781.0 569.4L780.0 569.2L779.0 567.4L778.0 567.6L777.0 566.9L776.0 567.2L775.0 566.8L774.0 567.1L773.0 566.9L772.0 566.7L771.0 567.2L770.0 567.1L769.0 566.9L768.0 567.2L767.0 566.7L766.0 567.2L765.0 567.7L764.0 567.4L763.0 567.4L762.0 567.6L761.0 567.3L760.0 567.4L759.0 568.6L758.0 567.8L757.0 568.2L756.0 568.4L755.0 568.1L754.0 568.8L753.0 568.4L752.0 569.3L751.0 570.4L750.0 571.4L749.0 571.1L748.0 570.4L747.0 569.5L746.0 571.3L745.0 570.1L744.0 569.6L743.0 569.5L742.0 571.1L741.0 571.2L740.0 570.7L739.0 570.8L738.0 570.0L737.0 569.7L736.0 568.6L735.0 568.6L734.0 569.3L733.0 568.2Z" fill="#fff"/>
 <path d="M609.0 588.0L610.0 587.4L611.0 587.2L612.0 587.6L613.0 588.0L614.0 587.4L615.0 587.7L616.0 587.5L617.0 587.1L618.0 587.4L619.0 587.3L620.0 588.0L621.0 587.8L622.0 587.8L623.0 588.0L624.0 587.7L625.0 587.7L626.0 587.1L627.0 587.7L628.0 588.0L629.0 587.2L630.0 587.8L631.0 587.8L632.0 587.7L633.0 587.9L634.0 587.8L635.0 587.4L636.0 587.8L637.0 587.3L638.0 587.9L639.0 587.3L640.0 588.0L641.0 587.7L642.0 587.9L643.0 588.0L644.0 587.9L645.0 588.3L646.0 587.7L647.0 587.8L648.0 588.2L649.0 587.8L650.0 587.8L651.0 588.0L652.0 587.9L653.0 587.9L654.0 587.9L655.0 587.9L656.0 587.5L657.0 587.8L658.0 587.0L659.0 586.9L660.0 587.0L661.0 587.1L662.0 586.8L663.0 587.0L664.0 586.7L665.0 587.0L666.0 587.4L667.0 587.3L668.0 588.2L669.0 587.7L670.0 587.8L671.0 587.9L672.0 587.7L673.0 587.9L674.0 588.3L675.0 588.3L676.0 587.9L677.0 587.7L678.0 588.1L679.0 588.1L680.0 588.3L681.0 588.3L682.0 588.0L683.0 588.2L684.0 588.2L685.0 587.9L686.0 588.2L687.0 587.5L688.0 587.5L688.0 590.5L687.0 590.5L686.0 589.8L685.0 590.1L684.0 589.8L683.0 589.8L682.0 590.0L681.0 589.7L680.0 589.7L679.0 589.9L678.0 589.9L677.0 590.3L676.0 590.1L675.0 589.7L674.0 589.7L673.0 590.1L672.0 590.3L671.0 590.1L670.0 590.2L669.0 590.3L668.0 589.8L667.0 590.7L666.0 590.6L665.0 591.0L664.0 591.3L663.0 591.0L662.0 591.2L661.0 590.9L660.0 591.0L659.0 591.1L658.0 591.0L657.0 590.2L656.0 590.5L655.0 590.1L654.0 590.1L653.0 590.1L652.0 590.1L651.0 590.0L650.0 590.2L649.0 590.2L648.0 589.8L647.0 590.2L646.0 590.3L645.0 589.7L644.0 590.1L643.0 590.0L642.0 590.1L641.0 590.3L640.0 590.0L639.0 590.7L638.0 590.1L637.0 590.7L636.0 590.2L635.0 590.6L634.0 590.2L633.0 590.1L632.0 590.3L631.0 590.2L630.0 590.2L629.0 590.8L628.0 590.0L627.0 590.3L626.0 590.9L625.0 590.3L624.0 590.3L623.0 590.0L622.0 590.2L621.0 590.2L620.0 590.0L619.0 590.7L618.0 590.6L617.0 590.9L616.0 590.5L615.0 590.3L614.0 590.6L613.0 590.0L612.0 590.4L611.0 590.8L610.0 590.6L609.0 590.0Z" fill="#fff"/>
 <path d="M736 581L744 589L736 597L728 589Z" fill="#3faa5a"/>
 <path d="M736 585V593M732 589H740" stroke="#fff" stroke-width="2"/>
 <!-- left rows -->
 <g fill="none" stroke="#6a7380" stroke-width="1.1">
  <rect x="8.5" y="441.5" width="11" height="9"/>
  <path d="M19.5 444.5L23 442V450L19.5 447.5"/>
 </g>
 <circle cx="124" cy="446" r="8" fill="#e96060"/><text x="124" y="450.5" font-size="12" font-weight="bold" fill="#fff" text-anchor="middle" font-family="Liberation Sans">?</text><circle cx="148.5" cy="446" r="2" fill="#808080"/><circle cx="177" cy="446" r="2" fill="#808080"/><text x="37" y="450.5" font-size="12.5" fill="#333" font-family="Liberation Sans">镜头</text><g fill="none" stroke="#7a828c" stroke-width="1.1"><path d="M11.7 475V465.5Q14 462.5 20.6 462V474.5M11.7 468Q14 465 20.6 464.5"/><circle cx="9.2" cy="476.5" r="2.6"/><circle cx="18" cy="474.5" r="2.5"/></g><circle cx="124" cy="470" r="8" fill="#e96060"/><text x="124" y="474.5" font-size="12" font-weight="bold" fill="#fff" text-anchor="middle" font-family="Liberation Sans">?</text><circle cx="148.5" cy="470" r="2" fill="#808080"/><circle cx="177" cy="470" r="2" fill="#808080"/><text x="37" y="474.5" font-size="12.5" fill="#333" font-family="Liberation Sans">音频</text><g fill="none" stroke="#7a828c" stroke-width="1.1"><path d="M11.7 499V489.5Q14 486.5 20.6 486V498.5M11.7 492Q14 489 20.6 488.5"/><circle cx="9.2" cy="500.5" r="2.6"/><circle cx="18" cy="498.5" r="2.5"/></g><circle cx="124" cy="494" r="8" fill="#e96060"/><text x="124" y="498.5" font-size="12" font-weight="bold" fill="#fff" text-anchor="middle" font-family="Liberation Sans">?</text><circle cx="148.5" cy="494" r="2" fill="#808080"/><circle cx="177" cy="494" r="2" fill="#808080"/><text x="37" y="498.5" font-size="12.5" fill="#333" font-family="Liberation Sans">音频</text><g fill="none" stroke="#7a828c" stroke-width="1.1"><path d="M11.7 523V513.5Q14 510.5 20.6 510V522.5M11.7 516Q14 513 20.6 512.5"/><circle cx="9.2" cy="524.5" r="2.6"/><circle cx="18" cy="522.5" r="2.5"/></g><circle cx="124" cy="518" r="8" fill="#e96060"/><text x="124" y="522.5" font-size="12" font-weight="bold" fill="#fff" text-anchor="middle" font-family="Liberation Sans">?</text><circle cx="148.5" cy="518" r="2" fill="#808080"/><circle cx="177" cy="518" r="2" fill="#808080"/><text x="37" y="522.5" font-size="12.5" fill="#333" font-family="Liberation Sans">音频</text><g fill="none" stroke="#7a828c" stroke-width="1.1"><path d="M11.7 547V537.5Q14 534.5 20.6 534V546.5M11.7 540Q14 537 20.6 536.5"/><circle cx="9.2" cy="548.5" r="2.6"/><circle cx="18" cy="546.5" r="2.5"/></g><circle cx="124" cy="542" r="8" fill="#e96060"/><text x="124" y="546.5" font-size="12" font-weight="bold" fill="#fff" text-anchor="middle" font-family="Liberation Sans">?</text><circle cx="148.5" cy="542" r="2" fill="#808080"/><circle cx="177" cy="542" r="2" fill="#808080"/><text x="37" y="546.5" font-size="12.5" fill="#333" font-family="Liberation Sans">音频</text><g fill="none" stroke="#7a828c" stroke-width="1.1"><path d="M11.7 571V561.5Q14 558.5 20.6 558V570.5M11.7 564Q14 561 20.6 560.5"/><circle cx="9.2" cy="572.5" r="2.6"/><circle cx="18" cy="570.5" r="2.5"/></g><circle cx="124" cy="566" r="8" fill="#e96060"/><text x="124" y="570.5" font-size="12" font-weight="bold" fill="#fff" text-anchor="middle" font-family="Liberation Sans">?</text><circle cx="148.5" cy="566" r="2" fill="#808080"/><circle cx="177" cy="566" r="2" fill="#808080"/><text x="37" y="570.5" font-size="12.5" fill="#333" font-family="Liberation Sans">音频</text><g fill="none" stroke="#7a828c" stroke-width="1.1"><path d="M11.7 595V585.5Q14 582.5 20.6 582V594.5M11.7 588Q14 585 20.6 584.5"/><circle cx="9.2" cy="596.5" r="2.6"/><circle cx="18" cy="594.5" r="2.5"/></g><circle cx="124" cy="590" r="8" fill="#e96060"/><text x="124" y="594.5" font-size="12" font-weight="bold" fill="#fff" text-anchor="middle" font-family="Liberation Sans">?</text><circle cx="148.5" cy="590" r="2" fill="#808080"/><circle cx="177" cy="590" r="2" fill="#808080"/><text x="37" y="594.5" font-size="12.5" fill="#333" font-family="Liberation Sans">音频</text>
 <line x1="401.5" y1="428" x2="401.5" y2="591" stroke="#b02a30" stroke-width="1"/>
 <path d="M394.5 412.5H410.5V426.5L402.5 433L394.5 426.5Z" fill="#5b9be6" stroke="#1f4f90" stroke-width="1.1"/>
 <path d="M399.5 417V425M402.5 417V425M405.5 417V425" stroke="#1d3f70" stroke-width="1"/>
</svg>
</body></html>
